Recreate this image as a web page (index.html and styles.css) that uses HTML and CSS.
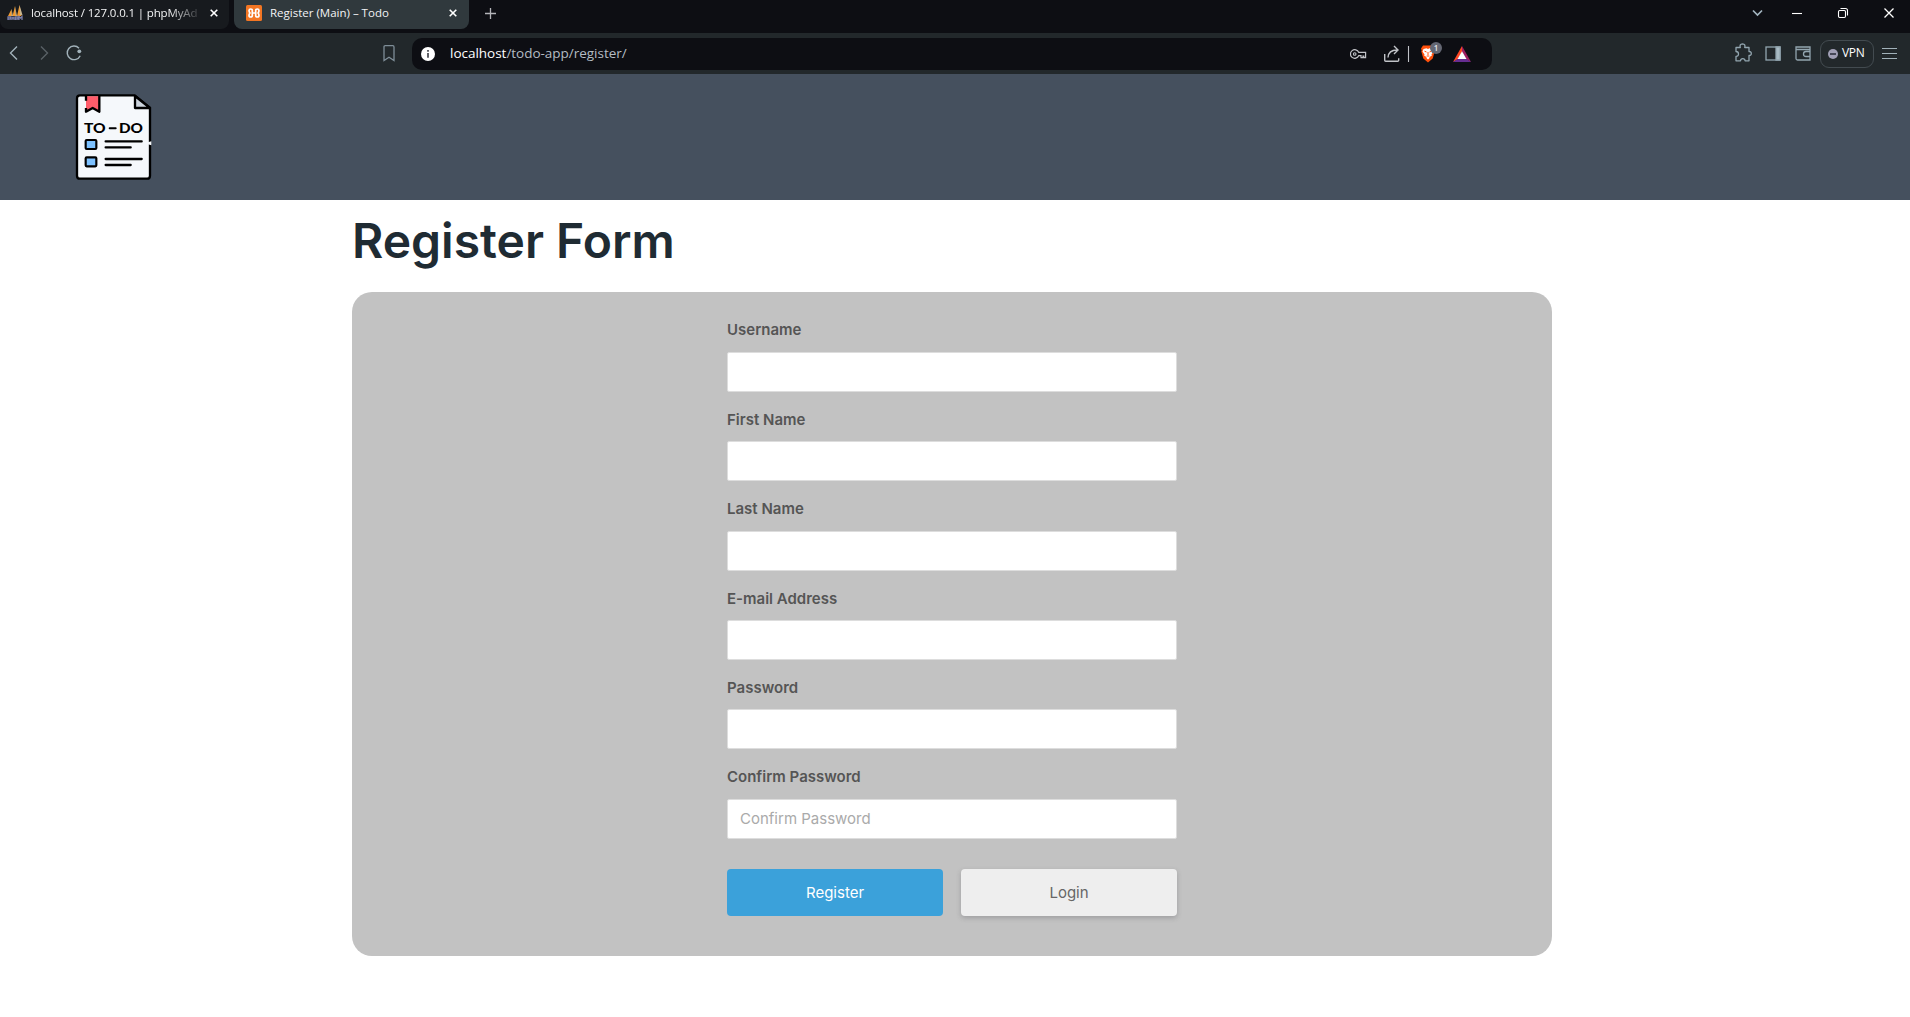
FILE: index.html
```html
<!DOCTYPE html>
<html lang="en">
<head>
<meta charset="utf-8">
<title>Register (Main) – Todo</title>
<link rel="stylesheet" href="styles.css">
</head>
<body>
<div class="tabs">
  <div class="tab tab-first">
    <svg class="favicon" width="16" height="16" viewBox="0 0 16 16"><path d="M1 11 4.500 4 5 11zM5.500 11 8 1 9 11zM10 11 12.500 0 14.500 11z" fill="#f29a2e"/><path d="M4.500 4 6 11H4.500zM8 1 10 11H8.500zM12.500 0 15.500 10H13z" fill="#c9b48c"/><path d="M1 15v-3h2.500v2H1M5 15v-3.500M7 15v-3.500M5 13h2M8.500 15v-3H11v2H8.500M12 15v-3.500l1.500 1.500 1.500-1.500V15" fill="none" stroke="#7c7fa8" stroke-width="1.300"/></svg>
    <span class="tab-title faded">localhost / 127.0.0.1 | phpMyAd</span>
    <svg class="tab-close" width="8" height="8" viewBox="0 0 8 8"><path d="M.7.700l6.600 6.600M7.300.700.700 7.300"/></svg>
  </div>
  <div class="tab tab-active">
    <svg class="favicon" width="16" height="16" viewBox="0 0 16 16"><rect width="16" height="16" rx="1.500" fill="#f37623"/><path d="M6.300 8V5.600Q6.300 4 4.700 4T3 5.600Q3 7 4 8 3 9 3 10.400 3 12 4.700 12T6.300 10.400V8H9.700V5.600Q9.700 4 11.300 4T13 5.600Q13 7 12 8 13 9 13 10.400 13 12 11.300 12T9.700 10.400V8" fill="none" stroke="#fff" stroke-width="1.700" stroke-linejoin="round"/></svg>
    <span class="tab-title">Register (Main) – Todo</span>
    <svg class="tab-close" width="8" height="8" viewBox="0 0 8 8"><path d="M.7.700l6.600 6.600M7.300.700.700 7.300"/></svg>
  </div>
  <svg class="new-tab" width="11" height="11" viewBox="0 0 11 11"><path d="M5.500 0v11M0 5.500h11" stroke="#b4b5b9" stroke-width="1.300"/></svg>
  <svg class="window-controls" width="150" height="33" viewBox="0 0 150 33" fill="none" stroke="#fff" stroke-width="1.100"><path d="M3 10.500l4.500 4.500 4.500-4.500" stroke="#a3b5c0" stroke-width="1.700"/><path d="M42 13.500h10"/><rect x="88.500" y="10.500" width="7" height="7" rx="1.200"/><path d="M90.500 8.500h5q2 0 2 2v5"/><path d="M134.500 8.500l9 9M143.500 8.500l-9 9" stroke-width="1.300"/></svg>
</div>
<div class="toolbar">
  <svg class="nav-icons" width="90" height="41" viewBox="0 0 90 41" fill="none" stroke="#a2b2ba" stroke-width="1.400"><path d="M17 13.500 10.500 20l6.500 6.500"/><path d="M41 13.500 47.500 20 41 26.500" stroke="#596166"/><path d="M79 15.200a6.800 6.800 0 1 0 1.200 7.500"/><circle cx="79.300" cy="18.300" r="1.900" fill="#a2b2ba" stroke="none"/></svg>
  <svg class="bookmark" width="12" height="17" viewBox="0 0 12 17"><path d="M2.200.700h7.600q1.200 0 1.200 1.200V15.500L6 12.200 1 15.500V1.900Q1 .700 2.200.700z" fill="none" stroke="#7e8d97" stroke-width="1.300"/></svg>
  <div class="address">
    <svg class="info" width="14" height="14" viewBox="0 0 14 14"><circle cx="7" cy="7" r="7" fill="#fff"/><path d="M7 3v1.700M7 6v4.800" stroke="#44464d" stroke-width="1.700"/></svg>
    <span class="url"><b>localhost</b>/todo-app/register/</span>
    <svg class="address-icons" width="142" height="32" viewBox="0 0 142 32" fill="none" stroke="#c1c3c8" stroke-width="1.400"><path d="M8.700 14.300a4.300 4.300 0 1 0 0 3.400h2.300v2h2v-1.700h.8v1.700h1.800v-5.400z" stroke-width="1.200"/><circle cx="4.700" cy="16" r="1.300" stroke-width="1.100"/><path d="M34.700 16v6.300q0 1 1 1h12q1 0 1-1v-2M38 19.500q.5-7.500 9-7.500M44 8l4 4-4 4"/><path d="M58.500 8v16" stroke-width="1.100"/>
      <path d="M73 7.500h10l2 3-.7 2 .4 1-2 7-4.700 4-4.700-4-2-7 .4-1-.7-2z" fill="#ff500b" stroke="none"/><path d="M73.500 11l3-.8 1.500.7 1.500-.7 3 .8 1 2.500-2 3 .3 1.300-2 1-.8 2-1 .7-1-.7-.8-2-2-1 .3-1.300-2-3z" fill="#fff" stroke="none"/><path d="M74.500 13.200l2 .8M81.500 13.200l-2 .8M78 14v3M76.700 18h2.600" stroke="#ff500b" stroke-width="1"/>
      <circle cx="86" cy="10" r="6" fill="#646773" stroke="none"/><text x="86" y="13" class="badge">1</text>
      <path d="M112 8v6l-4.500 7.500-4.500 2.500z" fill="#ff4724" stroke="none"/><path d="M112 8l9 16-4.500-2.500L112 14z" fill="#9e1f63" stroke="none"/><path d="M103 24h18l-4.500-3h-9z" fill="#662d91" stroke="none"/><path d="M112 13.200l4.500 7.800h-9z" fill="#fff" stroke="none"/></svg>
  </div>
  <svg class="side-icons" width="76" height="28" viewBox="0 0 76 28" fill="none" stroke="#92a5af" stroke-width="1.300"><path d="M1 7.500h4.300q-1.100-3.500 2.200-3.700 3.300.2 2.200 3.700H14v4q2.300-.2 2.300 2t-2.300 2v5.300h-3.900q-.2-2.200-2.300-2.200t-2.300 2.200H1v-4.500q2.500.1 2.500-2.300T1 11.500z" stroke-linejoin="round"/><rect x="31" y="7" width="14" height="13"/><path d="M41 7h4v13h-4z" fill="#a8bac3"/><path d="M75 11V7H61v11.500q0 1.500 1.500 1.500H75v-3M61 9.500h13.500M75 11.500h-4q-2.500 0-2.500 2.500t2.500 2.500h4z"/></svg>
  <div class="vpn"><svg width="10" height="10" viewBox="0 0 10 10"><circle cx="5" cy="5" r="5" fill="#a09fb5"/><path d="M2 5h6" stroke="#272a38" stroke-width="1.500"/></svg><span>VPN</span></div>
  <svg class="menu" width="16" height="13" viewBox="0 0 16 13"><path d="M0 1.500h15M0 6.500h15M0 11.500h15" stroke="#a1b1b9" stroke-width="1.200"/></svg>
</div>
<header class="site-header">
  <svg class="logo" width="110" height="125" viewBox="0 0 330 375">
    <path d="M60 46h164l46 38v203q0 9-9 9H60q-9 0-9-9V55q0-9 9-9z" fill="#f5f8fb" stroke="#000" stroke-width="7" stroke-linejoin="round"/>
    <path d="M225 48l45 36h-45z" fill="#ccd4dd" stroke="#000" stroke-width="7" stroke-linejoin="round"/>
    <path d="M78 49h40v45l-20-11-20 11z" fill="#ff5d6b"/><path d="M78 46v16M78 84v11l20-11 20 11V48" fill="none" stroke="#000" stroke-width="7" stroke-linejoin="round"/>
    <g class="logo-text"><text x="72" y="158" textLength="65" lengthAdjust="spacingAndGlyphs">TO</text><text x="177" y="158" textLength="72" lengthAdjust="spacingAndGlyphs">DO</text></g>
    <path d="M149 145h18" stroke="#000" stroke-width="6" stroke-linecap="round"/>
    <g fill="#7cc1ff" stroke="#000" stroke-width="6.500"><rect x="77" y="180" width="32" height="27" rx="3"/><rect x="77" y="232" width="32" height="27" rx="3"/></g>
    <path d="M137 184h108M137 202h75M137 237h108M137 255h75" stroke="#000" stroke-width="7" stroke-linecap="round"/>
    <path d="M264 187l10-3v12l-10-3z" fill="#f5f8fb"/>
  </svg>
</header>
<main class="page">
  <h1>Register Form</h1>
  <form class="card">
    <div class="fields">
      <div class="field"><label for="user">Username</label><input id="user" type="text"></div>
      <div class="field"><label for="first">First Name</label><input id="first" type="text"></div>
      <div class="field"><label for="last">Last Name</label><input id="last" type="text"></div>
      <div class="field"><label for="mail">E-mail Address</label><input id="mail" type="text"></div>
      <div class="field"><label for="pass">Password</label><input id="pass" type="password"></div>
      <div class="field"><label for="confirm">Confirm Password</label><input id="confirm" type="password" placeholder="Confirm Password"></div>
      <div class="actions"><button class="btn primary" type="button">Register</button><button class="btn" type="button">Login</button></div>
    </div>
  </form>
</main>
</body>
</html>
```
FILE: styles.css
```css
* { box-sizing: border-box; }
body { margin: 0; height: 1017px; overflow: hidden; background: #fff; font-family: Inter, sans-serif; }
svg { display: block; flex: none; }

.tabs { display: flex; height: 33px; background: #0d0e13; font-family: "Open Sans", sans-serif; font-size: 11.5px; color: #f3f4f5; }
.tab { display: flex; align-items: center; height: 29px; padding-bottom: 3px; border-radius: 0 0 8px 8px; }
.tab-first { width: 229px; margin-right: 5px; padding-left: 7px; padding-right: 11px; background: #171a1e; }
.tab-active { width: 235px; padding-left: 12px; padding-right: 12px; background: #30393d; }
.tab-title { flex: 1; margin-left: 8px; white-space: nowrap; line-height: 20px; }
.faded { margin-right: 13px; letter-spacing: -0.14px; -webkit-mask-image: linear-gradient(90deg, #000 138px, transparent 172px); mask-image: linear-gradient(90deg, #000 138px, transparent 172px); }
.tab-close { stroke: #fff; stroke-width: 1.6; }
.new-tab { margin: 8px 0 0 16px; }
.window-controls { margin-left: auto; margin-right: 10px; }

.toolbar { display: flex; align-items: center; height: 41px; background: #22282b; font-family: "Open Sans", sans-serif; }
.bookmark { margin-left: 293px; }
.address { display: flex; align-items: center; width: 1080px; height: 32px; margin-left: 17px; padding-left: 9px; border-radius: 10px; background: #0d0e13; }
.url { margin: -2px 0 0 15px; font-size: 13.5px; line-height: 20px; letter-spacing: -0.02px; color: #b4bcc3; }
.url b { font-weight: 400; color: #fff; }
.address-icons { margin-left: auto; }
.badge { fill: #e7e8ec; stroke: none; font: 600 8px "Open Sans", sans-serif; text-anchor: middle; }
.side-icons { margin-left: 243px; }
.vpn { display: flex; align-items: center; gap: 4px; width: 54px; height: 28px; margin-left: 9px; padding-left: 7px; border: 1px solid #434b50; border-radius: 9px; color: #fff; font-size: 12px; line-height: 18px; letter-spacing: -0.3px; }
.vpn span { margin-top: -2px; }
.menu { margin-left: 8px; }

.site-header { height: 126px; padding: 6px 0 0 60px; background: #45505e; }
.logo-text { font: 900 39px Lato, sans-serif; }

.page { width: 1200px; margin-left: 352px; }
h1 { margin: 0; padding-top: 10px; height: 92px; font-size: 48px; line-height: 62px; font-weight: 600; color: #1f2b33; }
.card { height: 664px; border-radius: 20px; background: #c2c2c2; }
.fields { width: 450px; margin: 0 auto; padding-top: 22px; }
.field { height: 89.375px; }
label { display: block; height: 37.8px; padding-top: 3.45px; font-size: 15px; line-height: 26px; font-weight: 600; color: #555; }
input { display: block; width: 450px; height: 40px; padding: 0 12px; border: 1px solid #ddd; border-radius: 2px; background: #fff; font: 15px Inter, sans-serif; color: #666; outline: none; }
input::placeholder { color: #aaa; }
.actions { display: flex; gap: 18px; padding-top: 19px; }
.btn { width: 216px; height: 47px; padding: 0; border: 0; border-radius: 4px; background: #eee; color: #666; font: 15px Inter, sans-serif; box-shadow: 0 2px 5px rgba(50, 50, 60, .25); }
.primary { background: #3ba1da; color: #fff; box-shadow: none; }
```
